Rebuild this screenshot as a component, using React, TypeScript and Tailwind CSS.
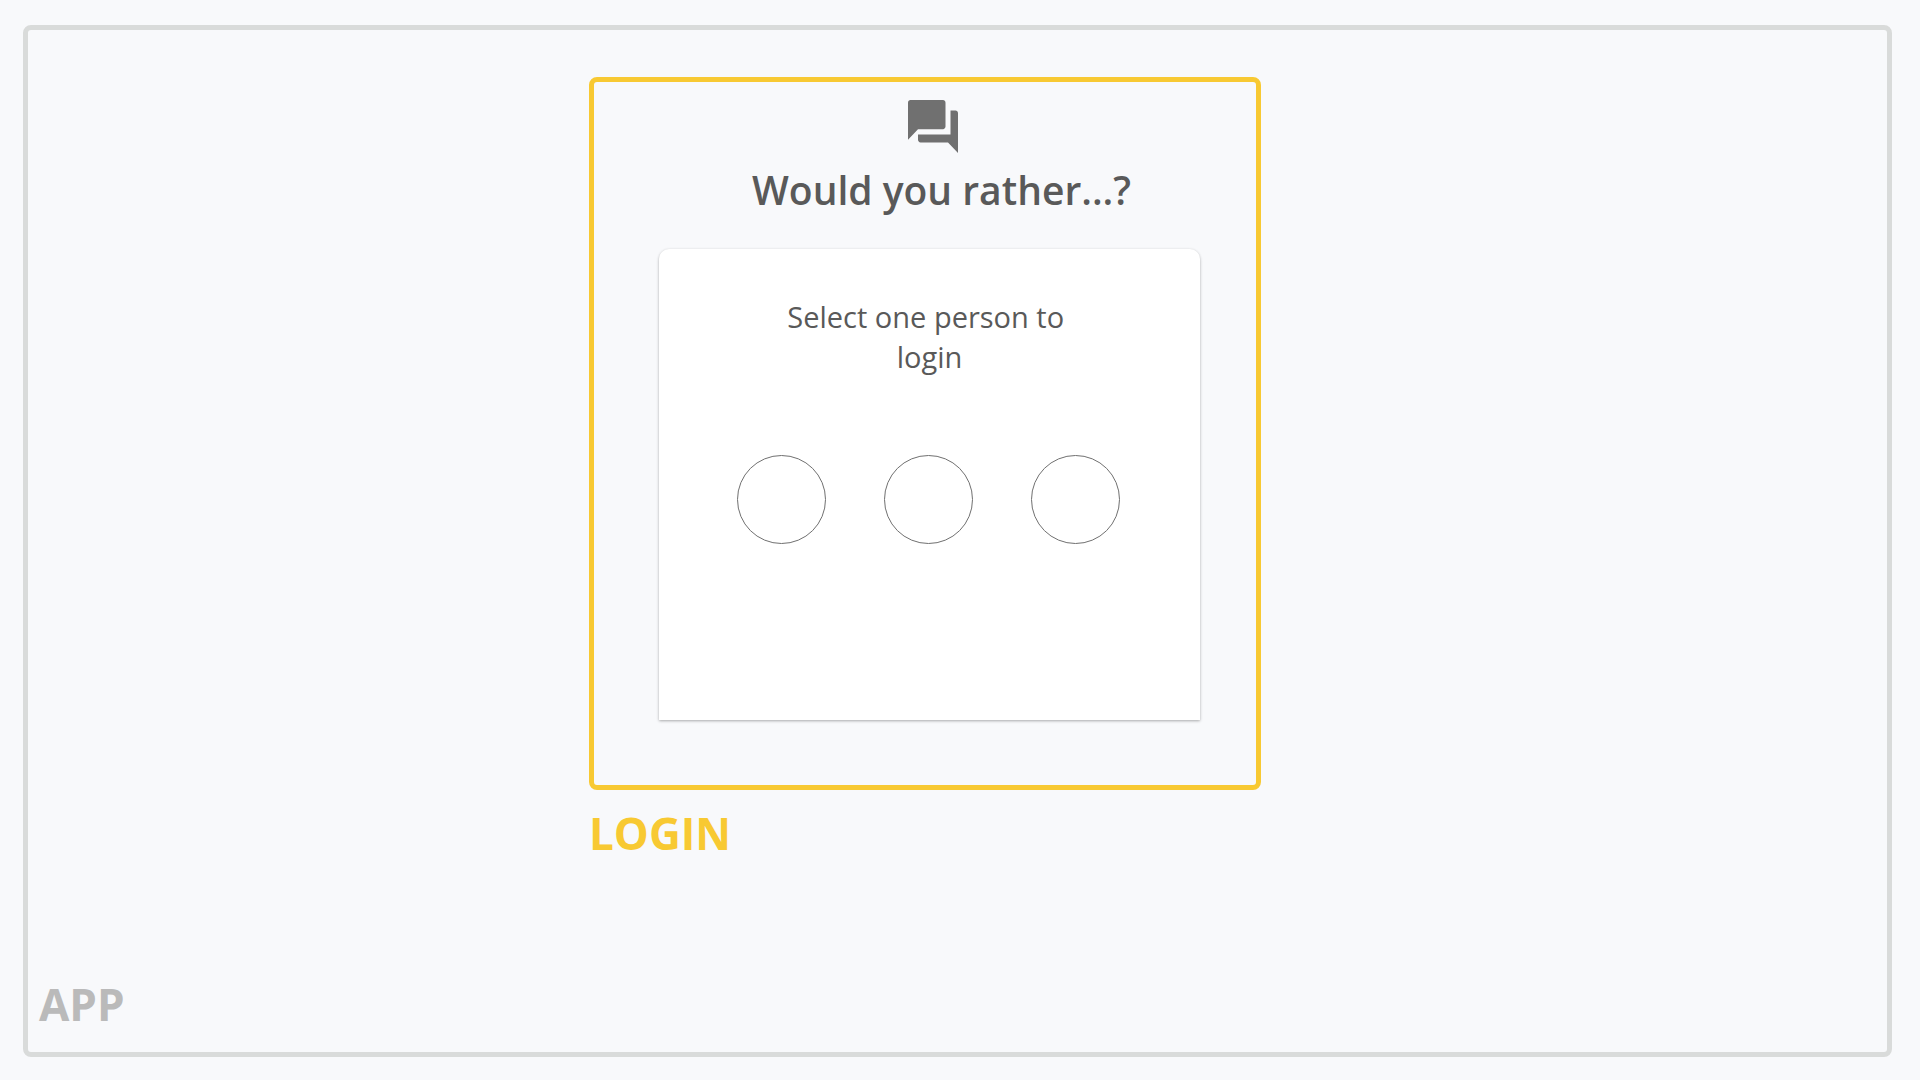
const people = ["First person", "Second person", "Third person"];

function ForumIcon() {
  return (
    <svg
      className="ml-[6px] h-[53px] w-[50px] text-[#707070]"
      viewBox="2 2 20 20"
      preserveAspectRatio="none"
      fill="currentColor"
      aria-hidden="true"
    >
      <path d="M21 6h-2v9H6v2c0 .55.45 1 1 1h11l4 4V7c0-.55-.45-1-1-1zm-4 6V3c0-.55-.45-1-1-1H3c-.55 0-1 .45-1 1v14l4-4h10c.55 0 1-.45 1-1z" />
    </svg>
  );
}

function LoginCard() {
  return (
    <section className="mt-[34px] flex min-h-[471px] w-full max-w-[541px] flex-col items-center rounded-t-[10px] bg-white pt-12 shadow-[0_1px_3px_rgba(0,0,0,0.32)]">
      <p className="text-center text-[29px] leading-10 text-[#595959]">
        Select one person to&nbsp;
        <br />
        login
      </p>
      <div className="mt-[78px] flex gap-[58px] pr-[2px]">
        {people.map((name) => (
          <button
            key={name}
            type="button"
            aria-label={name}
            className="size-[89px] rounded-full border border-[#707070] bg-white"
          />
        ))}
      </div>
    </section>
  );
}

export default function App() {
  return (
    <div className="flex min-h-screen flex-col bg-[#f8f9fb] pt-[25px] pr-7 pb-[23px] pl-[23px] font-['Open_Sans','Noto_Sans',sans-serif]">
      <main className="flex flex-1 flex-col rounded-lg border-5 border-[#d9dbda] pt-[47px]">
        <div className="flex flex-1 justify-center pr-[65px]">
          <div className="w-full max-w-[672px]">
            <div className="flex min-h-[713px] flex-col items-center rounded-lg border-5 border-[#f8c932] pt-[18px] pl-[9px]">
              <ForumIcon />
              <h1 className="mt-3 ml-6 text-[39px] leading-[50px] font-semibold text-[#595959]">
                Would you rather...?
              </h1>
              <LoginCard />
            </div>
            <h2 className="mt-[13px] text-[44px] leading-[60px] font-bold text-[#f8c932]">LOGIN</h2>
          </div>
        </div>
        <h2 className="mb-[18px] ml-[11px] text-[44px] leading-[60px] font-bold text-[#bababa]">APP</h2>
      </main>
    </div>
  );
}
